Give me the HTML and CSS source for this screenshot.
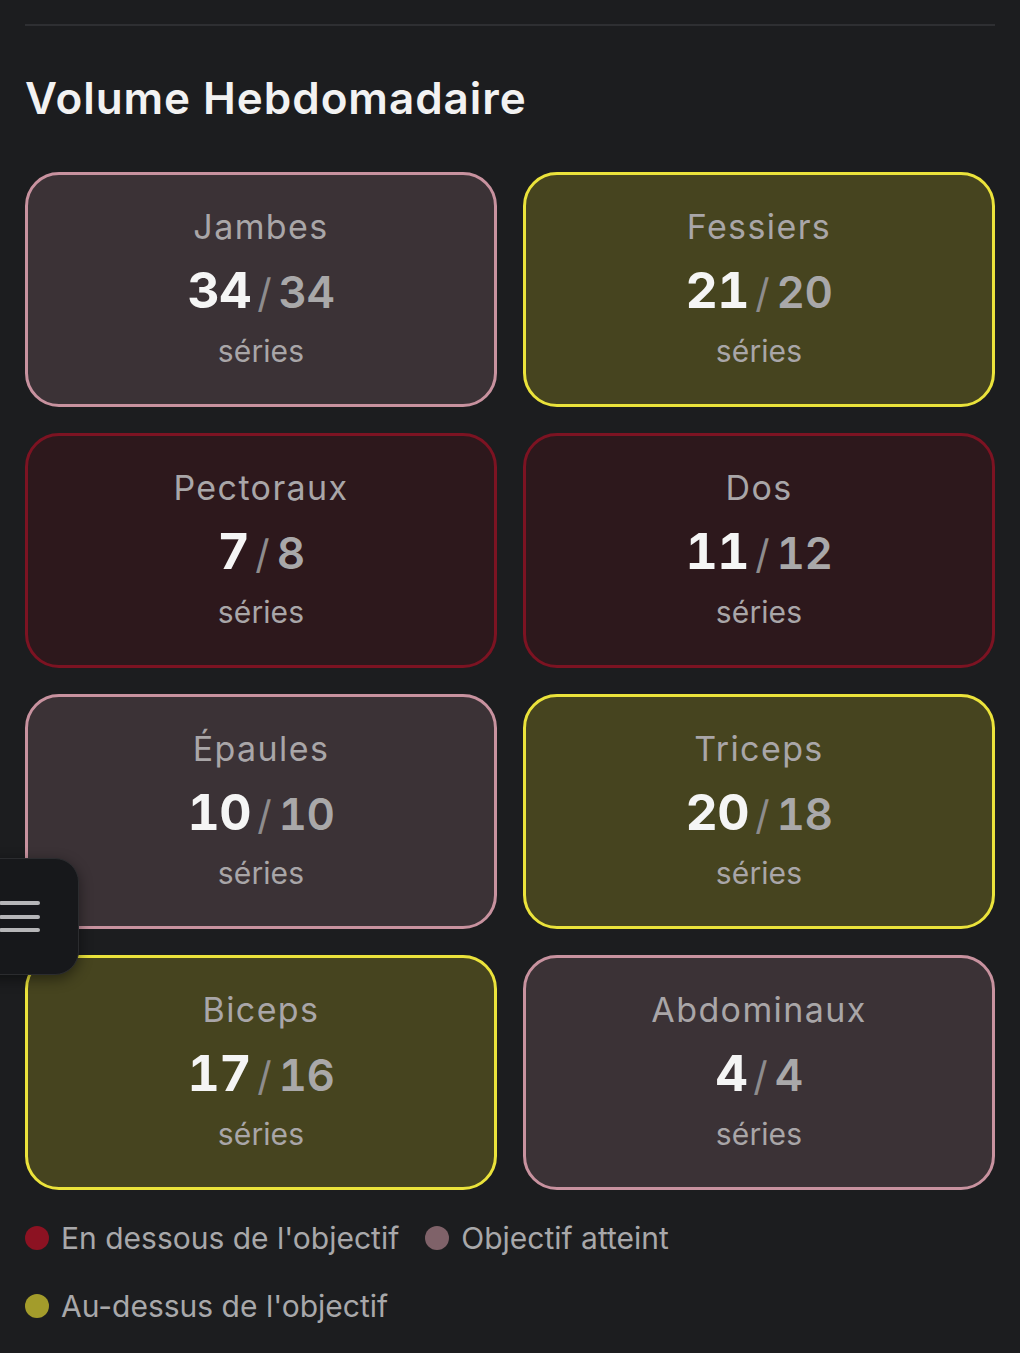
FILE: index.html
```html
<!DOCTYPE html>
<html lang="fr">
<head>
<meta charset="utf-8">
<title>Volume Hebdomadaire</title>
<link rel="stylesheet" href="styles.css">
</head>
<body>
<main class="page">
  <section class="volume">
    <h2 class="title">Volume Hebdomadaire</h2>
    <div class="grid">
      <div class="card card-met">
        <div class="label">Jambes</div>
        <div class="count"><span class="done">34</span><span class="sep">/</span><span class="goal">34</span></div>
        <div class="unit">séries</div>
      </div>
      <div class="card card-above">
        <div class="label">Fessiers</div>
        <div class="count"><span class="done">21</span><span class="sep">/</span><span class="goal">20</span></div>
        <div class="unit">séries</div>
      </div>
      <div class="card card-below">
        <div class="label">Pectoraux</div>
        <div class="count"><span class="done">7</span><span class="sep">/</span><span class="goal">8</span></div>
        <div class="unit">séries</div>
      </div>
      <div class="card card-below">
        <div class="label">Dos</div>
        <div class="count"><span class="done">11</span><span class="sep">/</span><span class="goal">12</span></div>
        <div class="unit">séries</div>
      </div>
      <div class="card card-met">
        <div class="label">Épaules</div>
        <div class="count"><span class="done">10</span><span class="sep">/</span><span class="goal">10</span></div>
        <div class="unit">séries</div>
      </div>
      <div class="card card-above">
        <div class="label">Triceps</div>
        <div class="count"><span class="done">20</span><span class="sep">/</span><span class="goal">18</span></div>
        <div class="unit">séries</div>
      </div>
      <div class="card card-above">
        <div class="label">Biceps</div>
        <div class="count"><span class="done">17</span><span class="sep">/</span><span class="goal">16</span></div>
        <div class="unit">séries</div>
      </div>
      <div class="card card-met">
        <div class="label">Abdominaux</div>
        <div class="count"><span class="done">4</span><span class="sep">/</span><span class="goal">4</span></div>
        <div class="unit">séries</div>
      </div>
    </div>
    <ul class="legend">
      <li class="legend-item"><span class="dot dot-below"></span>En dessous de l'objectif</li>
      <li class="legend-item"><span class="dot dot-met"></span>Objectif atteint</li>
      <li class="legend-item"><span class="dot dot-above"></span>Au-dessus de l'objectif</li>
    </ul>
  </section>
</main>
<button class="menu-btn" aria-label="Menu">
  <span class="bar"></span><span class="bar"></span><span class="bar"></span>
</button>
</body>
</html>
```

FILE: styles.css
```css
html, body {
  margin: 0;
  padding: 0;
  background: #1c1d1f;
}
body {
  font-family: Inter, "Noto Sans", "Liberation Sans", sans-serif;
  color: #f0f0f0;
  min-height: 1353px;
}
.page {
  padding: 24px 25px 0;
}
.volume {
  border-top: 2px solid #2e2f32;
}
.title {
  margin: 46px 0 47px;
  font-size: 44px;
  line-height: 53px;
  font-weight: 600;
  color: #f2f2f2;
  letter-spacing: 0.95px;
}
.grid {
  display: grid;
  grid-template-columns: 1fr 1fr;
  gap: 26px;
}
.card {
  box-sizing: border-box;
  height: 235px;
  border: 3px solid;
  border-radius: 34px;
  padding-top: 32px;
  display: flex;
  flex-direction: column;
  align-items: center;
}
.card-met {
  background: #3b3236;
  border-color: #c8929f;
}
.card-above {
  background: #46441f;
  border-color: #ebe33b;
}
.card-below {
  background: #2d181c;
  border-color: #7c1322;
}
.label {
  font-size: 34px;
  line-height: 40px;
  letter-spacing: 1.4px;
  color: #a9a6a8;
}
.count {
  margin-top: 8px;
  height: 70px;
  display: flex;
  align-items: baseline;
  line-height: 70px;
  font-variant-numeric: tabular-nums;
}
.done {
  font-size: 50px;
  font-weight: 700;
  letter-spacing: -0.5px;
  color: #f5f5f5;
}
.sep {
  font-size: 40px;
  font-weight: 400;
  color: #8e8c8d;
  margin: 0 7px 0 6px;
}
.goal {
  font-size: 44px;
  font-weight: 600;
  letter-spacing: -0.5px;
  color: #a9a8a9;
}
.unit {
  margin-top: 6px;
  font-size: 30px;
  line-height: 40px;
  letter-spacing: 0.1px;
  color: #a9a6a8;
}
.legend {
  list-style: none;
  margin: 28px 0 0;
  padding: 0;
  display: flex;
  flex-wrap: wrap;
  column-gap: 26px;
  row-gap: 28px;
}
.legend-item {
  display: flex;
  align-items: center;
  height: 40px;
  font-size: 30px;
  color: #a8a8aa;
}
.dot {
  width: 24px;
  height: 24px;
  border-radius: 50%;
  margin-right: 12px;
  flex: none;
}
.dot-below { background: #8c1222; }
.dot-met { background: #7f6269; }
.dot-above { background: #a39c2b; }
.menu-btn {
  position: fixed;
  left: -40px;
  top: 858px;
  width: 119px;
  height: 117px;
  box-sizing: border-box;
  background: #17181b;
  border: 1.5px solid #2b2c2f;
  border-radius: 24px;
  box-shadow: 0 4px 14px rgba(0, 0, 0, 0.45);
  display: flex;
  flex-direction: column;
  align-items: center;
  justify-content: center;
  gap: 9.5px;
  padding: 0;
}
.bar {
  display: block;
  width: 41px;
  height: 4px;
  border-radius: 2px;
  background: #b6b6b8;
}
```
